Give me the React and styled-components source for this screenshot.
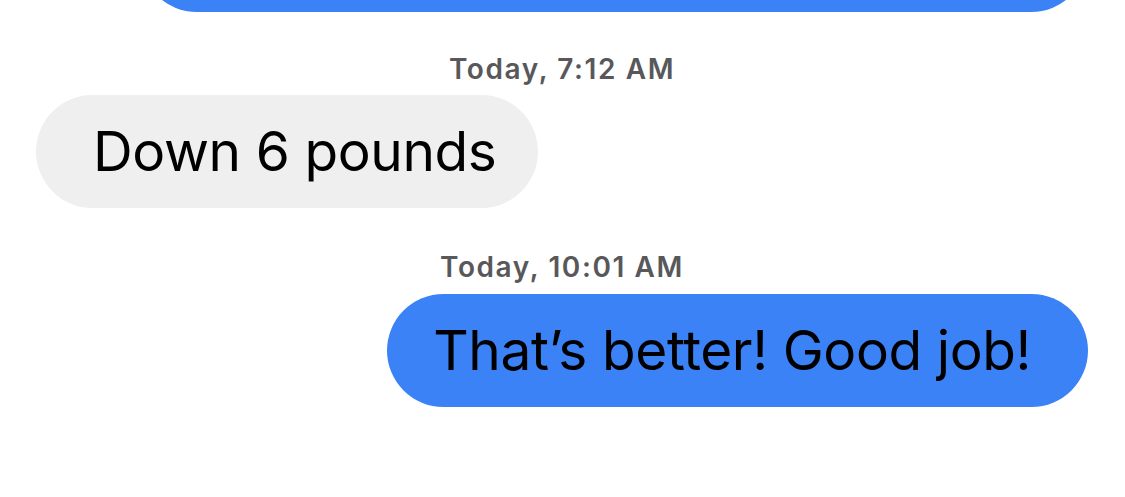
import React from 'react';
import styled, { createGlobalStyle, css } from 'styled-components';

const colors = {
  blue: '#3b82f6',
  grey: '#efefef',
  stamp: '#58585b',
  text: '#000000',
};

const GlobalStyle = createGlobalStyle`
  html, body {
    margin: 0;
    padding: 0;
    background: #ffffff;
  }
  body {
    font-family: Inter, "Liberation Sans", Arial, sans-serif;
    -webkit-font-smoothing: antialiased;
  }
`;

const Screen = styled.div`
  width: 1125px;
  height: 497px;
  overflow: hidden;
  background: #ffffff;
`;

// scrolled so that only the tail end of the previous message shows
const Thread = styled.div`
  display: flex;
  flex-direction: column;
  padding: 0 37px 0 36px;
  margin-top: -168px;
`;

const Row = styled.div`
  display: flex;
  justify-content: ${props => (props.sent ? 'flex-end' : 'flex-start')};
`;

const Bubble = styled.div`
  box-sizing: border-box;
  max-width: 948px;
  padding: 23px 42px 23px 57px;
  border-radius: 57px;
  background: ${colors.grey};
  color: ${colors.text};
  font-size: 55px;
  line-height: 67px;
  letter-spacing: -0.4px;

  ${props => props.sent && css`
    background: ${colors.blue};
    padding: 23px 57px 23px 46px;
  `};
`;

const Timestamp = styled.div`
  text-align: center;
  color: ${colors.stamp};
  font-size: 28px;
  font-weight: 600;
  line-height: 34px;
  letter-spacing: 1.6px;
  margin: ${props => (props.first ? '40px 0 9px' : '42px 0 10px')};
`;

const messages = [
  { id: 1, sent: true, text: 'Weigh in tomorrow morning and send me the number.' },
  { id: 2, stamp: 'Today, 7:12 AM', sent: false, text: 'Down 6 pounds' },
  { id: 3, stamp: 'Today, 10:01 AM', sent: true, text: 'That’s better! Good job!' },
];

export default function App() {
  return (
    <Screen>
      <GlobalStyle />
      <Thread>
        {messages.map((message, i) => (
          <React.Fragment key={message.id}>
            {message.stamp && <Timestamp first={i === 1}>{message.stamp}</Timestamp>}
            <Row sent={message.sent}>
              <Bubble sent={message.sent}>{message.text}</Bubble>
            </Row>
          </React.Fragment>
        ))}
      </Thread>
    </Screen>
  );
}
